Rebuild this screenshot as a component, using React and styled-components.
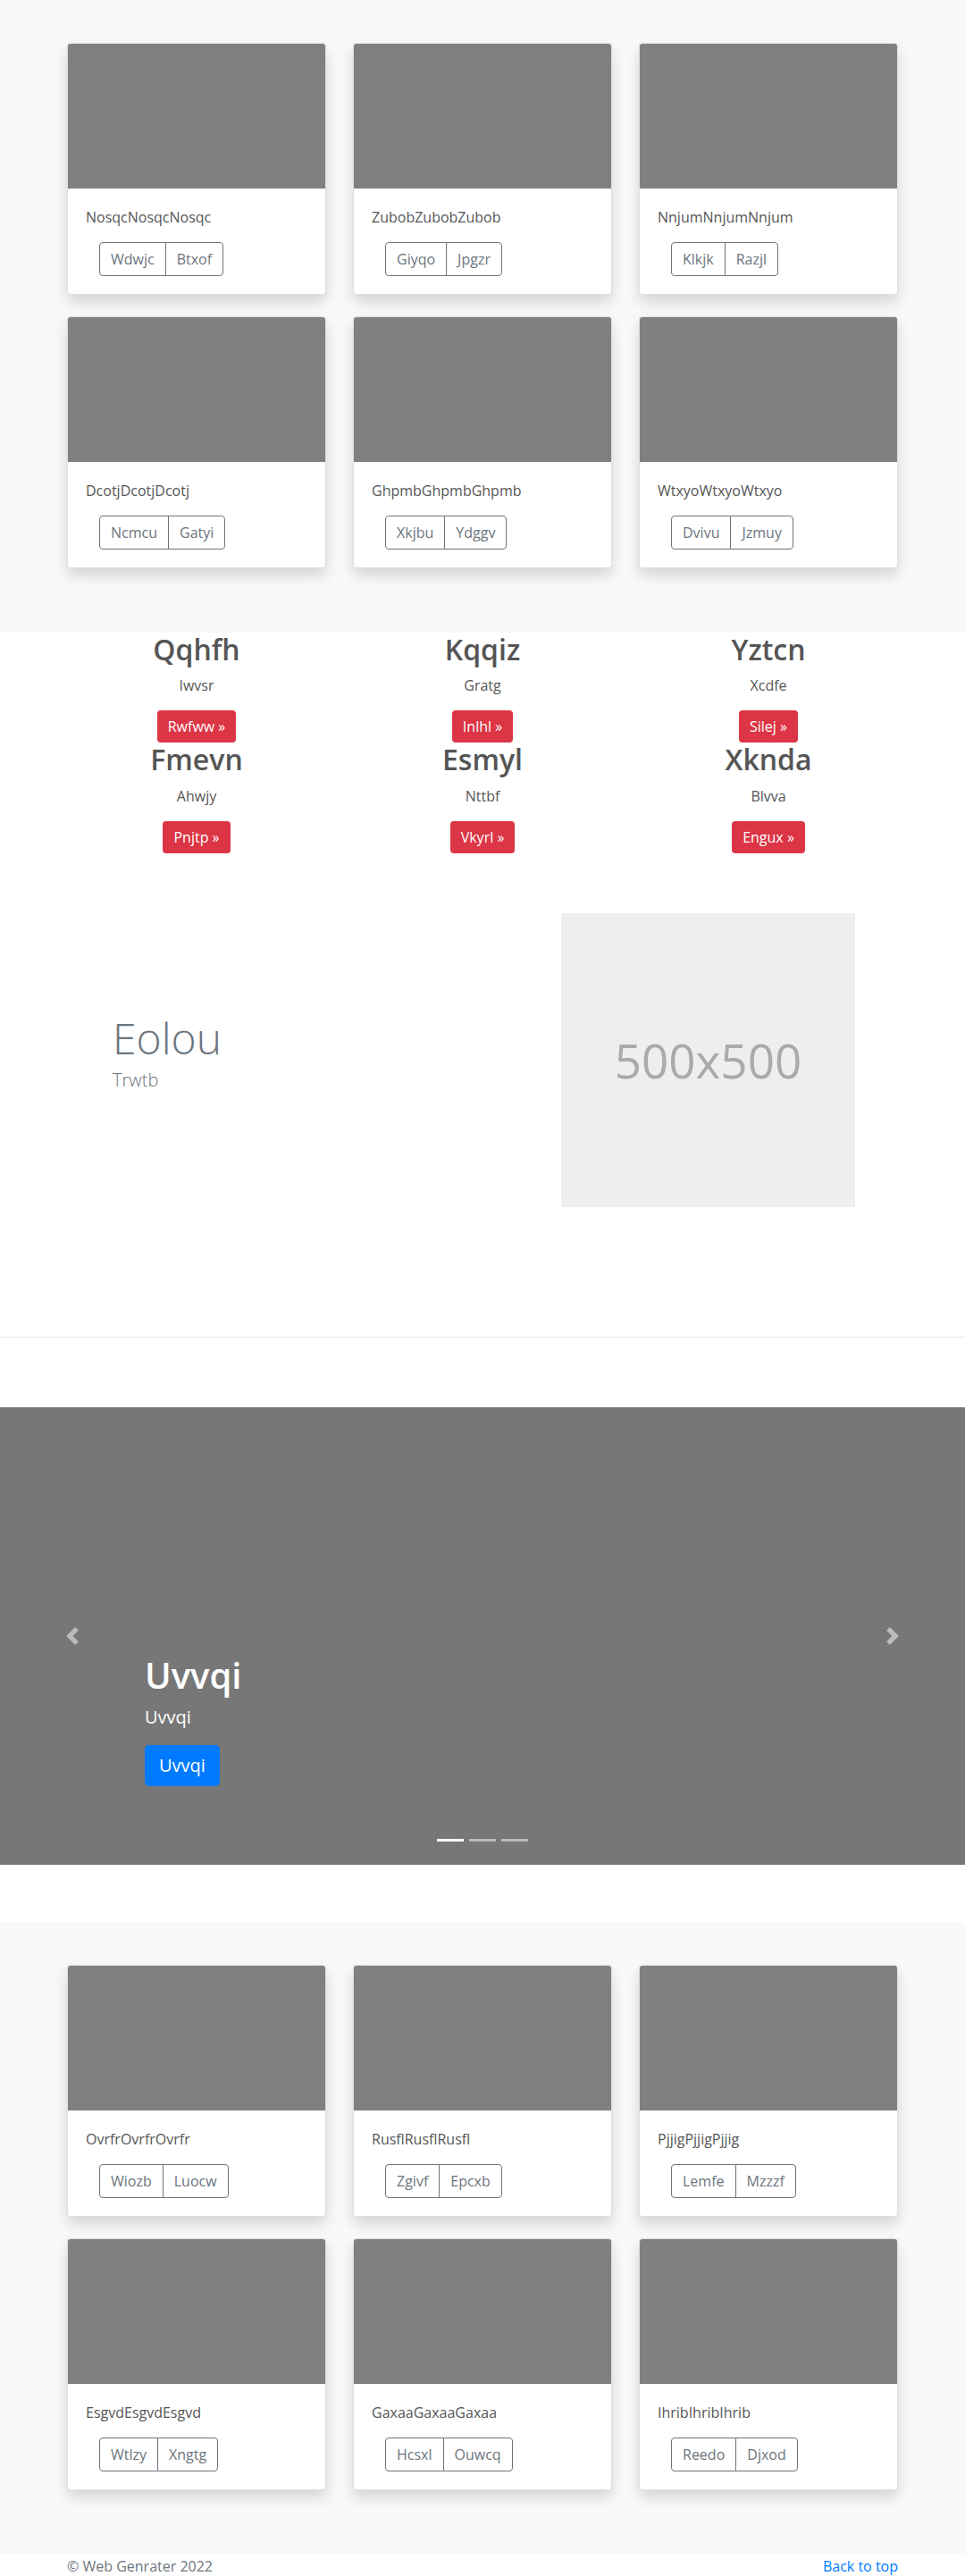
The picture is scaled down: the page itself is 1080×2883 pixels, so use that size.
import React from 'react';
import styled, { createGlobalStyle } from 'styled-components';

const GlobalStyle = createGlobalStyle`
  body {
    margin: 0;
    font-family: 'Segoe UI', 'Open Sans', 'Liberation Sans', sans-serif;
    font-size: 16px;
    line-height: 1.5;
    color: #212529;
    background: #fff;
  }
  * { box-sizing: border-box; }
`;

const Container = styled.div`
  width: 960px;
  margin: 0 auto;
  padding: 0 15px;
`;

const Album = styled.section`
  background: #f8f9fa;
  padding: 48px 0 72px;
`;

const CardGrid = styled.div`
  display: grid;
  grid-template-columns: repeat(3, 1fr);
  column-gap: 30px;
  row-gap: 24px;
`;

const Card = styled.div`
  background: #fff;
  border: 1px solid rgba(0, 0, 0, 0.125);
  border-radius: 4px;
  box-shadow: 0 8px 16px rgba(0, 0, 0, 0.15);
  overflow: hidden;
`;

const CardImg = styled.div`
  height: 162px;
  background: #808080;
`;

const CardBody = styled.div`
  padding: 20px;
`;

const CardText = styled.p`
  margin: 0 0 16px;
  color: #555;
`;

const BtnGroup = styled.div`
  display: inline-flex;
  margin-left: 15px;
`;

const OutlineBtn = styled.button`
  font: inherit;
  font-size: 16px;
  line-height: 24px;
  padding: 6px 12px;
  color: #6c757d;
  background: transparent;
  border: 1px solid #6c757d;
  border-radius: 0;
  & + & { margin-left: -1px; }
  &:first-child { border-radius: 4px 0 0 4px; }
  &:last-child { border-radius: 0 4px 4px 0; }
`;

const Marketing = styled.section`
  background: #fff;
`;

const MarketGrid = styled.div`
  display: grid;
  grid-template-columns: repeat(3, 1fr);
  column-gap: 30px;
  text-align: center;
`;

const MarketItem = styled.div`
  color: #555;
`;

const MarketTitle = styled.h2`
  margin: 0 0 9px;
  font-size: 32px;
  font-weight: 600;
  line-height: 1.2;
`;

const MarketText = styled.p`
  margin: 0 0 16px;
`;

const DangerBtn = styled.a`
  display: inline-block;
  padding: 6px 12px;
  font-size: 16px;
  line-height: 24px;
  color: #fff;
  background: #dc3545;
  border-radius: 4px;
  text-decoration: none;
`;

const Feature = styled.section`
  padding: 67px 0 145px;
`;

const FeatureRow = styled.div`
  display: flex;
  align-items: center;
  justify-content: space-between;
  padding: 0 48px 0 51px;
`;

const FeatureText = styled.div``;

const FeatureHeading = styled.h2`
  margin: 0 0 3px;
  font-size: 48px;
  font-weight: 300;
  line-height: 1.2;
  color: #6c757d;
`;

const Lead = styled.p`
  margin: 0 0 16px;
  font-size: 20px;
  font-weight: 300;
  line-height: 30px;
  color: #6c757d;
`;

const Placeholder = styled.div`
  width: 329px;
  height: 329px;
  background: #eee;
  color: #aaa;
  font-size: 53px;
  display: flex;
  align-items: center;
  justify-content: center;
`;

const Divider = styled.hr`
  margin: 0 0 78px;
  border: 0;
  border-top: 1px solid #e5e5e5;
`;

const Carousel = styled.div`
  position: relative;
  height: 512px;
  background: #777;
  margin-bottom: 64px;
`;

const Caption = styled.div`
  position: absolute;
  left: 15%;
  right: 15%;
  bottom: 48px;
  padding: 20px 0;
  color: #fff;
`;

const CaptionTitle = styled.h1`
  margin: 0 0 8px;
  font-size: 40px;
  font-weight: 600;
  line-height: 1.2;
`;

const CaptionText = styled.p`
  margin: 0 0 16px;
  font-size: 20px;
  line-height: 30px;
`;

const PrimaryBtn = styled.a`
  display: inline-block;
  margin-bottom: 20px;
  padding: 8px 16px;
  font-size: 20px;
  line-height: 30px;
  color: #fff;
  background: #007bff;
  border-radius: 5px;
  text-decoration: none;
`;

const Control = styled.div`
  position: absolute;
  top: 0;
  bottom: 0;
  ${p => (p.$side === 'left' ? 'left: 0;' : 'right: 0;')}
  width: 15%;
  display: flex;
  align-items: center;
  justify-content: center;
  opacity: 0.5;
`;

const Indicators = styled.ol`
  position: absolute;
  left: 0;
  right: 0;
  bottom: 0;
  margin: 0 0 16px;
  padding: 0;
  list-style: none;
  display: flex;
  justify-content: center;
`;

const Indicator = styled.li`
  width: 30px;
  height: 3px;
  margin: 10px 3px;
  background: #fff;
  opacity: ${p => (p.$active ? 1 : 0.5)};
`;

const Footer = styled.footer`
  padding-top: 1px;
  color: #6c757d;
`;

const FooterRow = styled.div`
  display: flex;
  justify-content: space-between;
`;

const FooterText = styled.p`
  margin: 0;
`;

const TopLink = styled.a`
  color: #007bff;
  text-decoration: none;
`;

const albumOne = [
  ['NosqcNosqcNosqc', 'Wdwjc', 'Btxof'],
  ['ZubobZubobZubob', 'Giyqo', 'Jpgzr'],
  ['NnjumNnjumNnjum', 'Klkjk', 'Razjl'],
  ['DcotjDcotjDcotj', 'Ncmcu', 'Gatyi'],
  ['GhpmbGhpmbGhpmb', 'Xkjbu', 'Ydggv'],
  ['WtxyoWtxyoWtxyo', 'Dvivu', 'Jzmuy']
];

const albumTwo = [
  ['OvrfrOvrfrOvrfr', 'Wiozb', 'Luocw'],
  ['RusflRusflRusfl', 'Zgivf', 'Epcxb'],
  ['PjjigPjjigPjjig', 'Lemfe', 'Mzzzf'],
  ['EsgvdEsgvdEsgvd', 'Wtlzy', 'Xngtg'],
  ['GaxaaGaxaaGaxaa', 'Hcsxl', 'Ouwcq'],
  ['IhribIhribIhrib', 'Reedo', 'Djxod']
];

const marketing = [
  ['Qqhfh', 'Iwvsr', 'Rwfww'],
  ['Kqqiz', 'Gratg', 'Inlhl'],
  ['Yztcn', 'Xcdfe', 'Silej'],
  ['Fmevn', 'Ahwjy', 'Pnjtp'],
  ['Esmyl', 'Nttbf', 'Vkyrl'],
  ['Xknda', 'Blvva', 'Engux']
];

const AlbumSection = ({ items }) => (
  <Album>
    <Container>
      <CardGrid>
        {items.map(([text, a, b]) => (
          <Card key={text}>
            <CardImg />
            <CardBody>
              <CardText>{text}</CardText>
              <BtnGroup>
                <OutlineBtn>{a}</OutlineBtn>
                <OutlineBtn>{b}</OutlineBtn>
              </BtnGroup>
            </CardBody>
          </Card>
        ))}
      </CardGrid>
    </Container>
  </Album>
);

const Chevron = ({ dir }) => (
  <svg width='20' height='20' viewBox='0 0 8 8' fill='#fff'>
    {dir === 'prev' ? (
      <path d='M5.25 0l-4 4 4 4 1.5-1.5L4.25 4l2.5-2.5L5.25 0z' />
    ) : (
      <path d='M2.75 0l-1.5 1.5L3.75 4l-2.5 2.5L2.75 8l4-4-4-4z' />
    )}
  </svg>
);

const App = () => (
  <>
    <GlobalStyle />
    <AlbumSection items={albumOne} />

    <Marketing>
      <Container>
        <MarketGrid>
          {marketing.map(([title, text, btn]) => (
            <MarketItem key={title}>
              <MarketTitle>{title}</MarketTitle>
              <MarketText>{text}</MarketText>
              <DangerBtn href='#'>{btn} &raquo;</DangerBtn>
            </MarketItem>
          ))}
        </MarketGrid>
      </Container>
    </Marketing>

    <Feature>
      <Container>
        <FeatureRow>
          <FeatureText>
            <FeatureHeading>Eolou</FeatureHeading>
            <Lead>Trwtb</Lead>
          </FeatureText>
          <Placeholder>500x500</Placeholder>
        </FeatureRow>
      </Container>
    </Feature>
    <Divider />

    <Carousel>
      <Control $side='left'>
        <Chevron dir='prev' />
      </Control>
      <Control $side='right'>
        <Chevron dir='next' />
      </Control>
      <Caption>
        <CaptionTitle>Uvvqi</CaptionTitle>
        <CaptionText>Uvvqi</CaptionText>
        <PrimaryBtn href='#'>Uvvqi</PrimaryBtn>
      </Caption>
      <Indicators>
        <Indicator $active />
        <Indicator />
        <Indicator />
      </Indicators>
    </Carousel>

    <AlbumSection items={albumTwo} />

    <Footer>
      <Container>
        <FooterRow>
          <FooterText>&copy; Web Genrater 2022</FooterText>
          <FooterText>
            <TopLink href='#'>Back to top</TopLink>
          </FooterText>
        </FooterRow>
      </Container>
    </Footer>
  </>
);

export default App;
